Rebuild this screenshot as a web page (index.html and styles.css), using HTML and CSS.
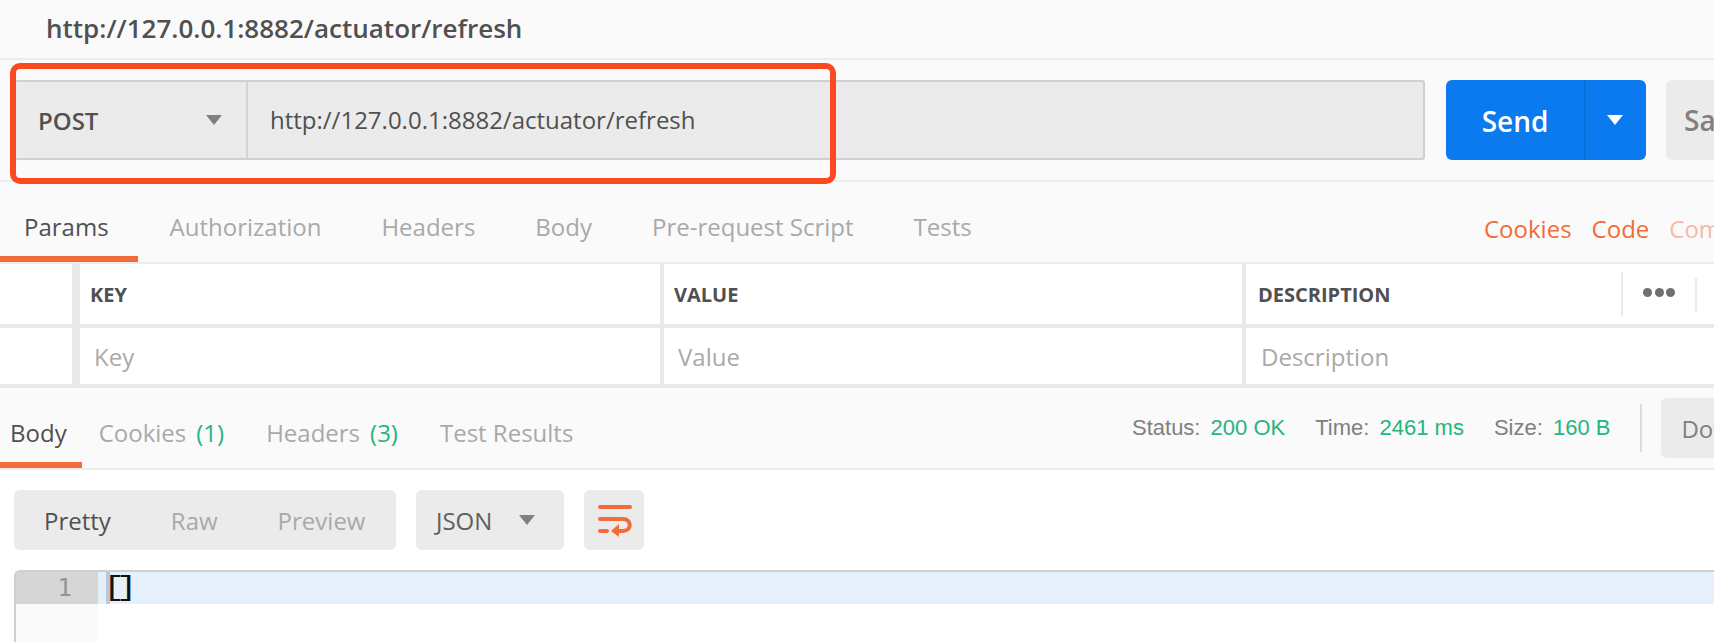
FILE: index.html
```html
<!DOCTYPE html>
<html lang="en">
<head>
<meta charset="utf-8">
<title>Postman request</title>
<link rel="stylesheet" href="styles.css">
</head>
<body>
<div class="app">
  <header class="title-bar">http://127.0.0.1:8882/actuator/refresh</header>

  <section class="request-bar">
    <div class="url-box">
      <div class="method"><span>POST</span><i class="caret caret-grey"></i></div>
      <div class="url">http://127.0.0.1:8882/actuator/refresh</div>
    </div>
    <div class="send">
      <span class="send-label">Send</span>
      <span class="send-more"><i class="caret caret-white"></i></span>
    </div>
    <div class="save">Save</div>
  </section>

  <nav class="req-tabs">
    <span class="tab tab-first active">Params</span>
    <span class="tab">Authorization</span>
    <span class="tab">Headers</span>
    <span class="tab">Body</span>
    <span class="tab">Pre-request Script</span>
    <span class="tab">Tests</span>
    <div class="links">
      <span>Cookies</span><span>Code</span><span class="faded">Comments</span>
    </div>
  </nav>

  <section class="params">
    <div class="row row-head">
      <div class="cell cell-check"></div>
      <div class="cell cell-key">KEY</div>
      <div class="cell cell-value">VALUE</div>
      <div class="cell cell-desc">DESCRIPTION
        <div class="head-tools">
          <span class="dots"><i></i><i></i><i></i></span>
          <span class="bulk"></span>
        </div>
      </div>
    </div>
    <div class="row row-input">
      <div class="cell cell-check"></div>
      <div class="cell cell-key">Key</div>
      <div class="cell cell-value">Value</div>
      <div class="cell cell-desc">Description</div>
    </div>
  </section>

  <nav class="res-tabs">
    <span class="rtab active">Body</span>
    <span class="rtab">Cookies <em>(1)</em></span>
    <span class="rtab">Headers <em>(3)</em></span>
    <span class="rtab">Test Results</span>
    <div class="meta">
      <span class="stat">Status: <b>200 OK</b></span>
      <span class="stat">Time: <b>2461 ms</b></span>
      <span class="stat">Size: <b>160 B</b></span>
      <span class="meta-sep"></span>
      <span class="download">Download</span>
    </div>
  </nav>

  <section class="toolbar">
    <div class="modes">
      <span class="mode current">Pretty</span>
      <span class="mode">Raw</span>
      <span class="mode">Preview</span>
    </div>
    <div class="format"><span>JSON</span><i class="caret caret-grey"></i></div>
    <div class="wrap">
      <svg width="36" height="34" viewBox="0 0 36 34" fill="none" aria-hidden="true">
        <path d="M4 4H34M4 16H27C36 16 36 28 27 28H19M4 28H11" stroke="#f26b3a" stroke-width="4" stroke-linecap="round"/>
        <path d="M23 21V34L15 28Z" fill="#f26b3a"/>
      </svg>
    </div>
  </section>

  <section class="editor">
    <div class="gutter"><div class="line-no">1</div></div>
    <div class="code"><div class="code-line"><span class="cursor"></span><span class="brackets">[]</span></div></div>
  </section>

  <div class="callout"></div>
</div>
</body>
</html>
```

FILE: styles.css
```css
* { box-sizing: border-box; }
html, body { margin: 0; padding: 0; }
body { width: 1714px; height: 642px; overflow: hidden; background: #fff; }
.app {
  position: relative;
  width: 1714px;
  height: 642px;
  overflow: hidden;
  font-family: "Open Sans", sans-serif;
  color: #505050;
}

.title-bar {
  height: 60px;
  padding: 0 0 2px 46px;
  display: flex;
  align-items: center;
  background: #fafafa;
  border-bottom: 2px solid #ececec;
  font-size: 26px;
  font-weight: 600;
}

.request-bar {
  height: 122px;
  padding: 20px 0 20px 15px;
  display: flex;
  background: #fafafa;
  border-bottom: 2px solid #ececec;
}
.url-box {
  flex: none;
  width: 1410px;
  display: flex;
  background: #ebebeb;
  border: solid #d0d0d0;
  border-width: 2px 2px 2px 0;
  border-radius: 3px;
}
.method {
  width: 233px;
  padding: 0 24px 0 23px;
  display: flex;
  align-items: center;
  justify-content: space-between;
  border-right: 2px solid #d4d4d4;
  font-size: 24px;
  font-weight: 600;
}
.caret { display: block; width: 0; height: 0; border-style: solid; border-width: 10px 8px 0; border-color: transparent; }
.caret-grey { border-top-color: #808080; }
.caret-white { border-top-color: #fff; }
.url { padding: 0 0 2px 22px; display: flex; align-items: center; font-size: 24px; }

.send {
  flex: none;
  width: 200px;
  margin-left: 21px;
  display: flex;
  background: #0b7aee;
  border-radius: 6px;
  color: #fff;
  font-size: 28px;
  font-weight: 600;
}
.send-label { width: 138px; padding-top: 2px; display: flex; align-items: center; justify-content: center; }
.send-more { flex: 1; padding: 0 3px 0 0; display: flex; align-items: center; justify-content: center; border-left: 2px solid #0a6fd8; }
.save {
  flex: none;
  width: 120px;
  margin-left: 20px;
  padding-left: 18px;
  display: flex;
  align-items: center;
  background: #ebebeb;
  border-radius: 6px;
  color: #808080;
  font-size: 28px;
  font-weight: 600;
}

.req-tabs {
  height: 82px;
  display: flex;
  background: #fafafa;
  border-bottom: 2px solid #ececec;
  font-size: 24px;
}
.tab {
  height: 80px;
  padding: 15px 30px 0;
  display: flex;
  align-items: center;
  color: #a9a9a9;
  border-bottom: 6px solid transparent;
}
.tab.active { color: #505050; border-bottom-color: #f26b3a; }
.tab-first { padding: 15px 29px 0 24px; margin-right: 2px; }
.links {
  position: absolute;
  left: 1484px;
  top: 182px;
  height: 80px;
  display: flex;
  gap: 20px;
  align-items: center;
  color: #f26b3a;
  white-space: nowrap;
  padding-top: 12px;
}
.links .faded { opacity: .45; }

.row { display: flex; background: #fff; }
.row-head { height: 64px; border-bottom: 4px solid #e9e9e9; }
.row-input { height: 60px; border-bottom: 4px solid #e9e9e9; }
.cell { display: flex; align-items: center; height: 100%; }
.cell-check { width: 80px; border-right: 8px solid #e9e9e9; }
.cell-key { width: 584px; border-right: 4px solid #e9e9e9; }
.cell-value { width: 582px; border-right: 4px solid #e9e9e9; }
.cell-desc { flex: 1; position: relative; }
.row-head .cell { font-size: 20px; font-weight: 700; }
.row-head .cell-key { padding-left: 10px; }
.row-head .cell-value { padding-left: 10px; }
.row-head .cell-desc { padding-left: 12px; }
.row-input .cell { font-size: 24px; color: #a9a9a9; }
.row-input .cell-key { padding-left: 14px; }
.row-input .cell-value { padding-left: 14px; }
.row-input .cell-desc { padding-left: 15px; }

.head-tools { position: absolute; left: 375px; top: 8px; height: 44px; width: 93px; display: flex; }
.dots { width: 74px; height: 44px; padding-left: 20px; display: flex; gap: 2.5px; align-items: center; border-left: 2px solid #ececec; padding-bottom: 4px; }
.dots i { width: 9px; height: 9px; background: #707070; border-radius: 50%; }
.bulk { width: 2px; height: 34px; margin-top: 6px; background: #ececec; }

.res-tabs {
  height: 82px;
  display: flex;
  background: #fafafa;
  border-bottom: 2px solid #ececec;
  font-size: 24px;
}
.rtab {
  height: 80px;
  padding: 14px 21px 0 11px;
  margin-right: 10px;
  display: flex;
  align-items: center;
  gap: 10px;
  color: #a9a9a9;
  border-bottom: 6px solid transparent;
}
.rtab.active { color: #505050; border-bottom-color: #f26b3a; margin-right: 6px; padding-left: 10px; padding-right: 15px; }
.rtab em { font-style: normal; color: #26b47f; }
.meta {
  position: absolute;
  left: 1132px;
  top: 388px;
  height: 80px;
  display: flex;
  align-items: flex-start;
  font-family: "Liberation Sans", Arial, sans-serif;
  font-size: 22px;
  color: #808080;
  white-space: nowrap;
}
.stat { margin-top: 27px; margin-right: 30px; word-spacing: 4px; }
.stat b { font-weight: 400; color: #26b47f; word-spacing: 0; }
.meta-sep { width: 2px; height: 48px; margin-top: 16px; background: #dcdcdc; }
.download {
  width: 100px;
  height: 60px;
  margin: 10px 0 0 19px;
  padding: 0 0 0 20px;
  display: flex;
  align-items: center;
  background: #ebebeb;
  border-radius: 6px;
  font-family: "Open Sans", sans-serif;
  font-size: 24px;
  color: #808080;
}

.toolbar { height: 100px; padding: 20px 0 20px 14px; display: flex; background: #fff; font-size: 24px; }
.modes { width: 382px; display: flex; background: #ebebeb; border-radius: 6px; align-items: center; padding: 0 0 0 30px; gap: 60px; color: #a9a9a9; }
.mode.current { color: #505050; }
.format { width: 148px; margin-left: 20px; padding: 0 29px 0 20px; display: flex; align-items: center; justify-content: space-between; background: #ebebeb; border-radius: 6px; color: #606060; }
.wrap { width: 60px; margin-left: 20px; display: flex; align-items: center; justify-content: center; background: #ebebeb; border-radius: 6px; }

.editor { height: 72px; margin-left: 14px; display: flex; border-top: 2px solid #d0d0d0; border-left: 2px solid #d0d0d0; border-top-left-radius: 6px; }
.gutter { width: 82px; background: #fafafa; }
.line-no { height: 32px; padding-right: 26px; text-align: right; background: #d6d6d6; color: #949494; font-family: "DejaVu Sans Mono", monospace; font-size: 24px; line-height: 32px; }
.code { flex: 1; }
.code-line { height: 32px; display: flex; background: #e5f0fc; }
.cursor { width: 4px; height: 32px; margin-left: 8px; background: #b7c8dd; }
.brackets { margin-left: -7px; font-family: "Liberation Mono", monospace; font-size: 28px; line-height: 32px; letter-spacing: -7px; color: #111; transform: scaleX(1.3); transform-origin: left center; }

.callout { position: absolute; left: 10px; top: 63px; width: 826px; height: 121px; border: 6px solid #fb4a21; border-radius: 10px; }
```
